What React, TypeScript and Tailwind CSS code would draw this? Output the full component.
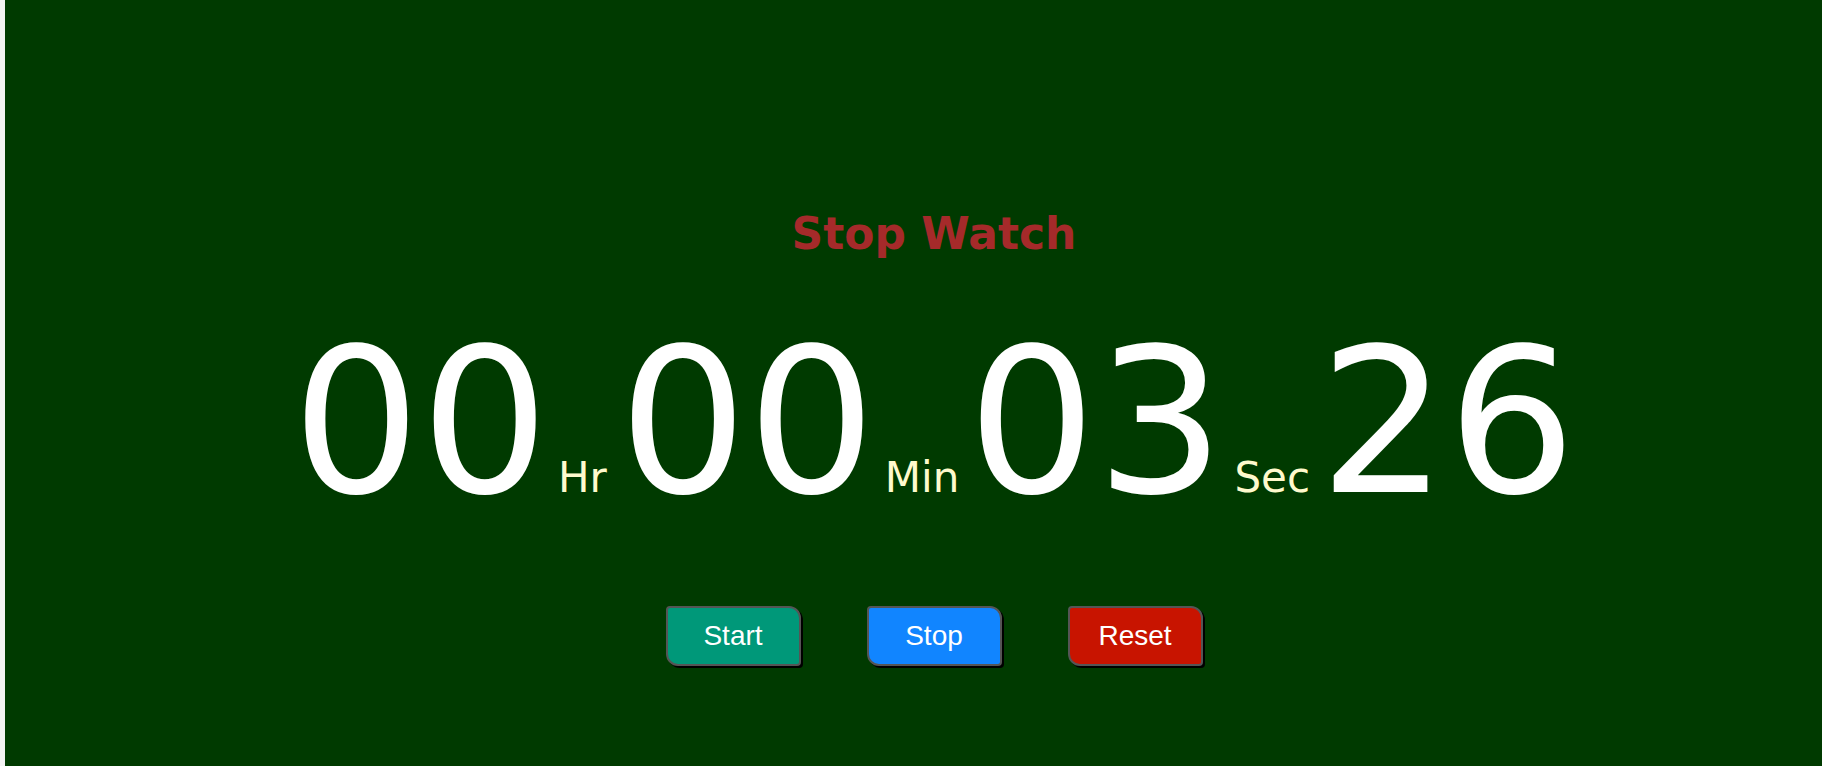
import { useState } from 'react'

const DIGIT = "font-['DejaVu_Sans',Verdana,sans-serif] text-[202px] leading-[202px] text-white"
const LABEL = "font-['DejaVu_Sans',Verdana,sans-serif] text-[42px] leading-[42px] text-[#fffacd]"

function pad(n: number) {
  return n < 10 ? `0${n}` : `${n}`
}

export default function App() {
  // fixed at the state shown in the screenshot
  const [time] = useState({ hr: 0, min: 0, sec: 3, ms: 26 })

  return (
    <div className="flex h-screen w-full bg-[#f3f3f3]">
      <div className="ml-[5px] flex flex-1 flex-col items-center bg-[#003a00] pl-[41px]">
        <h1 className="pt-[208px] font-['DejaVu_Sans',Verdana,sans-serif] text-[44px] font-bold leading-[52px] text-[#a52a2a]">
          Stop Watch
        </h1>

        <div className="mt-[61px] flex items-baseline">
          <span className={DIGIT}>{pad(time.hr)}</span>
          <span className={`${LABEL} ml-[9px] mr-[12px]`}>Hr</span>
          <span className={DIGIT}>{pad(time.min)}</span>
          <span className={`${LABEL} ml-[9px] mr-[8px]`}>Min</span>
          <span className={DIGIT}>{pad(time.sec)}</span>
          <span className={`${LABEL} ml-[10px] mr-[9px]`}>Sec</span>
          <span className={DIGIT}>{pad(time.ms)}</span>
        </div>

        <div className="mt-[83px] flex gap-[66px]">
          <button className="h-[60px] w-[135px] rounded-tl-[4px] rounded-tr-[12px] rounded-br-[4px] rounded-bl-[12px] border-2 border-[#555] bg-[#009879] font-['Liberation_Sans',Arial,sans-serif] text-[28px] text-white shadow-[2px_2px_0_#000]">
            Start
          </button>
          <button className="h-[60px] w-[135px] rounded-tl-[4px] rounded-tr-[12px] rounded-br-[4px] rounded-bl-[12px] border-2 border-[#555] bg-[#1185ff] font-['Liberation_Sans',Arial,sans-serif] text-[28px] text-white shadow-[2px_2px_0_#000]">
            Stop
          </button>
          <button className="h-[60px] w-[135px] rounded-tl-[4px] rounded-tr-[12px] rounded-br-[4px] rounded-bl-[12px] border-2 border-[#555] bg-[#c81400] font-['Liberation_Sans',Arial,sans-serif] text-[28px] text-white shadow-[2px_2px_0_#000]">
            Reset
          </button>
        </div>
      </div>
    </div>
  )
}
